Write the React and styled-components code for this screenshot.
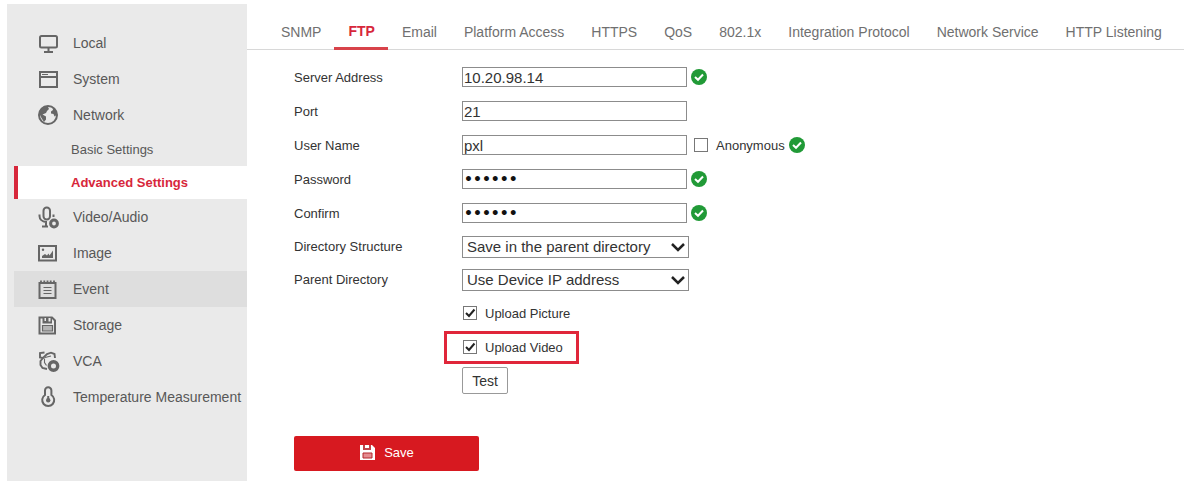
import React from 'react'
import styled, { createGlobalStyle } from 'styled-components'

const GlobalStyle = createGlobalStyle`
  * {
    box-sizing: border-box;
  }
  body {
    margin: 0;
    background-color: #fff;
    color: #333;
    font-family: 'Liberation Sans', Arial, sans-serif;
    font-size: 13px;
  }
`

const Page = styled.div`
  min-height: 100vh;
  padding: 4px 0 0 7px;
  display: flex;
`

const Sidebar = styled.nav`
  flex: none;
  width: 240px;
  padding-top: 21px;
  background-color: #eaeaea;
`

const NavItem = styled.a`
  height: 36px;
  margin-left: 7px;
  padding-left: 22px;
  display: flex;
  align-items: center;
  gap: 13px;
  color: #585858;
  font-size: 14px;
  white-space: nowrap;
  text-decoration: none;
  background-color: ${(props) => (props.$hover ? '#dedede' : 'transparent')};
`

const SubItem = styled.a`
  height: 33px;
  margin-left: 7px;
  padding-left: 53px;
  display: flex;
  align-items: center;
  border-left: 4px solid ${(props) => (props.$active ? '#d7273b' : 'transparent')};
  background-color: ${(props) => (props.$active ? '#fff' : 'transparent')};
  color: ${(props) => (props.$active ? '#d7273b' : '#585858')};
  font-weight: ${(props) => (props.$active ? 'bold' : 'normal')};
  text-decoration: none;
`

const NavIcon = styled.svg`
  flex: none;
  width: 24px;
  height: 24px;
  fill: none;
  stroke: #666;
  stroke-width: 2;
`

const Content = styled.main`
  flex: 1;
  min-width: 0;
`

const Tabs = styled.nav`
  height: 46px;
  padding-left: 20px;
  display: flex;
  align-items: stretch;
  border-bottom: 1px solid #d8d8d8;
`

const Tab = styled.a`
  padding: 10px 13px 0 14px;
  display: flex;
  align-items: center;
  margin-bottom: -1px;
  color: ${(props) => (props.$active ? '#d7273b' : '#707070')};
  font-weight: ${(props) => (props.$active ? 'bold' : 'normal')};
  border-bottom: ${(props) => (props.$active ? '3px solid #d8434a' : 'none')};
  font-size: 14px;
  white-space: nowrap;
  text-decoration: none;
`

const Form = styled.form`
  padding: 10px 0 10px 47px;
`

const Row = styled.div`
  height: ${(props) => (props.$compact ? 33 : 34)}px;
  display: flex;
  align-items: center;
`

const Label = styled.label`
  width: 168px;
  flex: none;
`

const Spacer = styled.span`
  width: 168px;
  flex: none;
`

const TextInput = styled.input`
  width: 225px;
  height: 20px;
  padding: 0 1px;
  border: 1px solid #8c8c8c;
  border-radius: 0;
  background-color: #fff;
  color: #333;
  font-family: 'Liberation Sans', Arial, sans-serif;
  font-size: 15px;
  &[type='password'] {
    color: #111;
    font-family: 'DejaVu Sans', sans-serif;
    font-size: 14px;
    font-weight: bold;
  }
`

const SelectBox = styled.div`
  position: relative;
  width: 227px;
  height: 22px;
`

const Select = styled.select`
  width: 100%;
  height: 100%;
  padding: 0 24px 0 4px;
  appearance: none;
  border: 1px solid #8c8c8c;
  border-radius: 0;
  background-color: #fff;
  color: #333;
  font-family: 'Liberation Sans', Arial, sans-serif;
  font-size: 15px;
`

const Chevron = styled.svg`
  position: absolute;
  right: 4px;
  top: 6px;
  width: 14px;
  height: 10px;
  pointer-events: none;
`

const CheckIcon = styled.svg`
  flex: none;
  width: 16px;
  height: 16px;
  margin-left: 4px;
`

const CheckLabel = styled.label`
  display: flex;
  align-items: center;
  gap: 8px;
  margin-left: ${(props) => (props.$inline ? 7 : 1)}px;
`

const Checkbox = styled.input`
  appearance: none;
  width: 14px;
  height: 14px;
  margin: 0;
  border: 1px solid #777;
  background-color: #fff;
`

const Tick = styled.span`
  position: relative;
  display: flex;
  svg {
    position: absolute;
    inset: 0;
    width: 14px;
    height: 14px;
    visibility: hidden;
    pointer-events: none;
  }
  input:checked + svg {
    visibility: visible;
  }
`

const Highlight = styled.div`
  height: 33px;
  margin-left: -18px;
  padding: 0 13px 0 15px;
  display: flex;
  align-items: center;
  border: 3px solid #e0263a;
`

const TestButton = styled.button`
  width: 46px;
  height: 27px;
  padding: 0;
  border: 1px solid #999;
  border-radius: 2px;
  background-color: #fff;
  color: #333;
  font-family: inherit;
  font-size: 14px;
`

const SaveButton = styled.button`
  width: 185px;
  height: 35px;
  margin-top: 39px;
  padding: 0 0 2px;
  display: flex;
  align-items: center;
  justify-content: center;
  gap: 8px;
  border: none;
  border-radius: 2px;
  background-color: #d71920;
  color: #fff;
  font-family: inherit;
  font-size: 13px;
`

const Local = () => (
  <NavIcon viewBox="0 0 24 24">
    <rect x="4" y="5" width="17" height="11.500" rx="1.500" />
    <path d="M12.500 16.500V20M8 21h9" />
  </NavIcon>
)

const System = () => (
  <NavIcon viewBox="0 0 24 24">
    <rect x="4" y="5" width="17" height="15" />
    <path d="M4 10h17" />
    <path d="M6 7.500h6" strokeWidth="1" />
  </NavIcon>
)

const Network = () => (
  <NavIcon viewBox="0 0 24 24">
    <circle cx="12" cy="12" r="9" />
    <path
      d="M4 7 8 3.500 12 4 13 6 11 8 10 10 6.500 11.500 10 13.500 10 16.500 8 19 5.500 15 4 12ZM16.500 4 20 8 20.500 12 18.500 13.500 17.500 11 15 10.500 15 8.500 17 7Z"
      fill="#666"
      stroke="none"
    />
  </NavIcon>
)

const VideoAudio = () => (
  <NavIcon viewBox="0 0 24 24">
    <rect x="7.500" y="2.500" width="6.500" height="12" rx="3.200" />
    <path d="M3.500 9.500v1.500a7.500 6 0 0 0 6.500 6v3.500M6 21.500h6M17.500 9.500v2.500" />
    <circle cx="18" cy="18.500" r="3.400" strokeWidth="3" fill="#eaeaea" />
  </NavIcon>
)

const Image = () => (
  <NavIcon viewBox="0 0 24 24">
    <rect x="3" y="5" width="17" height="14.500" />
    <path d="M6 17v-2l3-2 2 1.500 1.500-2 1 2 3.500-5v7.500Z" fill="#666" stroke="none" />
    <circle cx="7" cy="8.800" r="1.200" fill="#666" stroke="none" />
  </NavIcon>
)

const Event = () => (
  <NavIcon viewBox="0 0 24 24">
    <rect x="3.500" y="6" width="16" height="15" />
    <path d="M5 3.500v3M8.300 3.500v3M11.500 3.500v3M14.700 3.500v3M18 3.500v3" strokeWidth="1.800" />
    <path d="M7.500 10.500h8M7.500 13.500h8M7.500 16.500h8" strokeWidth="1.200" />
  </NavIcon>
)

const Storage = () => (
  <NavIcon viewBox="0 0 24 24">
    <path d="M3.500 4.500H16l3 3V20.500H3.500Z" />
    <path d="M6.500 4.500h9.500v6H6.500Z" fill="#666" stroke="none" />
    <path d="M8.500 5h1.500v3h-1.500ZM12.500 5h2v3.500h-2Z" fill="#eaeaea" stroke="none" />
    <path d="M6.500 12.500h10v5.500h-10Z" fill="#b4b4b4" strokeWidth="1.200" />
  </NavIcon>
)

const Vca = () => (
  <NavIcon viewBox="0 0 24 24">
    <path d="M8.500 3.500 4 4v4.500l3 .5 4-4 4-1.300 3.500 1.300.5 4" strokeWidth="1.900" />
    <path d="M7 9 4.500 12v4l2 3 4.500 1" strokeWidth="1.900" />
    <path d="M9 8.500 15 7M8.500 9.500v4l2 3" strokeWidth="1.100" />
    <circle cx="17.500" cy="17" r="4.200" strokeWidth="3.400" fill="#eaeaea" />
  </NavIcon>
)

const Temperature = () => (
  <NavIcon viewBox="0 0 24 24">
    <path d="M9 10V5.500a3.200 3.200 0 0 1 6.400 0V10a6 6 0 1 1-6.400 0Z" />
    <path d="M12.200 11v4" />
    <circle cx="12.200" cy="15.200" r="2.200" fill="#666" stroke="none" />
  </NavIcon>
)

const SaveIcon = () => (
  <svg width="17" height="17" viewBox="0 0 17 17">
    <path d="M1 1h12l3 3v12H1Z" fill="#fff" />
    <path d="M4 1h8v5H4Z" fill="#c0434a" />
    <path d="M6 1h4v3H6Z" fill="#fff" />
    <path d="M4 9h9v5H4Z" fill="#e58c90" stroke="#b3262d" />
  </svg>
)

const Valid = () => (
  <CheckIcon viewBox="0 0 16 16">
    <circle cx="8" cy="8" r="8" fill="#219a37" />
    <path d="M4 8 7 10.800 12 5.500" fill="none" stroke="#fff" strokeWidth="2" />
  </CheckIcon>
)

const Check = ({ label, inline, checked }) => (
  <CheckLabel $inline={inline}>
    <Tick>
      <Checkbox type="checkbox" defaultChecked={checked} />
      <svg viewBox="0 0 14 14">
        <path d="M3 7 6 10 11.500 3.500" fill="none" stroke="#222" strokeWidth="2" />
      </svg>
    </Tick>
    {label}
  </CheckLabel>
)

const Field = ({ id, label, type = 'text', value, valid, children }) => (
  <Row>
    <Label htmlFor={id}>{label}</Label>
    <TextInput id={id} type={type} defaultValue={value} />
    {children}
    {valid && <Valid />}
  </Row>
)

const SelectField = ({ id, label, value }) => (
  <Row $compact>
    <Label htmlFor={id}>{label}</Label>
    <SelectBox>
      <Select id={id}>
        <option>{value}</option>
      </Select>
      <Chevron viewBox="0 0 14 10">
        <path d="M1 2 7 8 13 2" fill="none" stroke="#222" strokeWidth="2.500" />
      </Chevron>
    </SelectBox>
  </Row>
)

const tabs = [
  'SNMP',
  'FTP',
  'Email',
  'Platform Access',
  'HTTPS',
  'QoS',
  '802.1x',
  'Integration Protocol',
  'Network Service',
  'HTTP Listening',
]

function App() {
  return (
    <Page>
      <GlobalStyle />
      <Sidebar>
        <NavItem href="#local"><Local />Local</NavItem>
        <NavItem href="#system"><System />System</NavItem>
        <NavItem href="#network"><Network />Network</NavItem>
        <SubItem href="#basic">Basic Settings</SubItem>
        <SubItem href="#advanced" $active>Advanced Settings</SubItem>
        <NavItem href="#video"><VideoAudio />Video/Audio</NavItem>
        <NavItem href="#image"><Image />Image</NavItem>
        <NavItem href="#event" $hover><Event />Event</NavItem>
        <NavItem href="#storage"><Storage />Storage</NavItem>
        <NavItem href="#vca"><Vca />VCA</NavItem>
        <NavItem href="#temperature"><Temperature />Temperature Measurement</NavItem>
      </Sidebar>
      <Content>
        <Tabs>
          {tabs.map((tab) => (
            <Tab key={tab} href="#tab" $active={tab === 'FTP'}>{tab}</Tab>
          ))}
        </Tabs>
        <Form onSubmit={(e) => e.preventDefault()}>
          <Field id="server" label="Server Address" value="10.20.98.14" valid />
          <Field id="port" label="Port" value="21" />
          <Field id="user" label="User Name" value="pxl" valid>
            <Check label="Anonymous" inline />
          </Field>
          <Field id="password" label="Password" type="password" value="abc123" valid />
          <Field id="confirm" label="Confirm" type="password" value="abc123" valid />
          <SelectField id="structure" label="Directory Structure" value="Save in the parent directory" />
          <SelectField id="parent" label="Parent Directory" value="Use Device IP address" />
          <Row>
            <Spacer />
            <Check label="Upload Picture" checked />
          </Row>
          <Row>
            <Spacer />
            <Highlight>
              <Check label="Upload Video" checked />
            </Highlight>
          </Row>
          <Row $compact>
            <Spacer />
            <TestButton type="button">Test</TestButton>
          </Row>
          <SaveButton type="submit"><SaveIcon />Save</SaveButton>
        </Form>
      </Content>
    </Page>
  )
}

export default App
